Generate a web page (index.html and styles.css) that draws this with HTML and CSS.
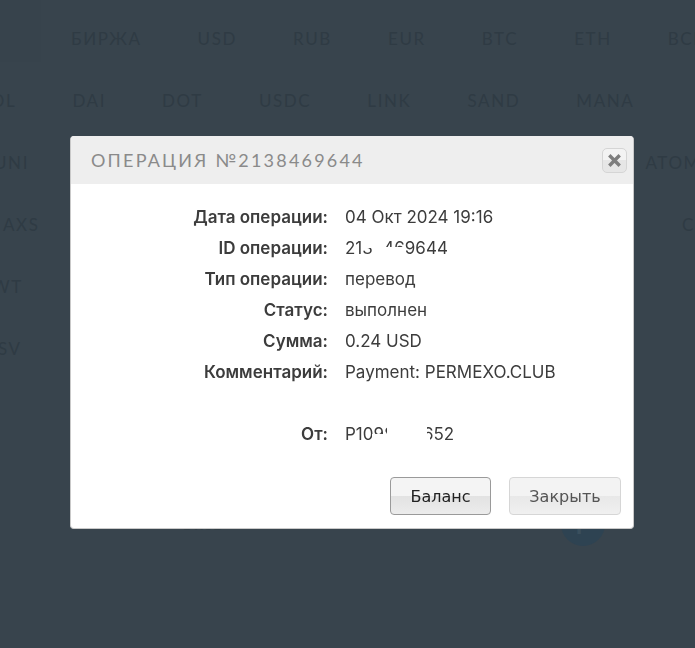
FILE: index.html
```html
<!DOCTYPE html>
<html lang="ru">
<head>
  <meta charset="UTF-8">
  <title>Операция</title>
  <link rel="stylesheet" href="styles.css">
</head>
<body>

  <div class="page">
    <div class="logo-box"></div>
    <div class="tabs tabs-first">
      <span>БИРЖА</span><span>USD</span><span>RUB</span><span>EUR</span><span>BTC</span><span>ETH</span><span>BCH</span>
    </div>
    <div class="tabs tabs-second">
      <span>SOL</span><span>DAI</span><span>DOT</span><span>USDC</span><span>LINK</span><span>SAND</span><span>MANA</span>
    </div>
    <div class="tabs tabs-spread tabs-uni"><span>UNI</span><span>ATOM</span></div>
    <div class="tabs tabs-spread tabs-axs"><span>AXS</span><span>C</span></div>
    <div class="tabs tabs-wt"><span>WT</span></div>
    <div class="tabs tabs-sv"><span>SV</span></div>

    <div class="history">
      <div class="history-row">
        <span class="history-sum">+ 1 RUB</span>
        <span class="history-dash">—</span>
        <span class="history-icon">P</span>
      </div>
      <div class="history-row">
        <span class="history-sum">+ 1 RUB</span>
        <span class="history-dash"></span>
        <span class="history-icon">P</span>
      </div>
    </div>
  </div>

  <!-- Окно операции -->
  <div class="overlay">
    <div class="modal">
      <div class="modal-head">
        <h2>Операция №2138469644</h2>
        <button class="close-btn" aria-label="Закрыть">
          <svg width="13" height="13" viewBox="0 0 13 13"><path d="M2.5 2.5 L10.5 10.5 M10.5 2.5 L2.5 10.5" stroke="#7d7d7d" stroke-width="3.4" stroke-linecap="square"/></svg>
        </button>
      </div>

      <div class="details">
        <div class="label">Дата операции:</div><div class="value">04 Окт 2024 19:16</div>
        <div class="label">ID операции:</div><div class="value">2138469644<i class="mask mask-id"></i><i class="mask mask-id2"></i></div>
        <div class="label">Тип операции:</div><div class="value">перевод</div>
        <div class="label">Статус:</div><div class="value">выполнен</div>
        <div class="label">Сумма:</div><div class="value">0.24 USD</div>
        <div class="label">Комментарий:</div><div class="value">Payment: PERMEXO.CLUB</div>
        <div class="label"></div><div class="value"></div>
        <div class="label">От:</div><div class="value">P1098143652<i class="mask mask-from"></i><i class="mask mask-from2"></i></div>
      </div>

      <div class="modal-foot">
        <button class="btn">Баланс</button>
        <button class="btn btn-off">Закрыть</button>
      </div>
    </div>
  </div>

</body>
</html>
```

FILE: styles.css
```css
html, body {
  margin: 0;
  padding: 0;
  height: 100%;
  overflow: hidden;
  background: #38444d;
}

.page {
  height: 648px;
  overflow: hidden;
  padding-top: 7px;
  box-sizing: border-box;
  font-family: 'Lato', sans-serif;
}

.logo-box {
  position: absolute;
  top: 0;
  left: 0;
  width: 41px;
  height: 62px;
  background: #37434c;
}

.tabs {
  position: relative;
  display: flex;
  gap: 56px;
  height: 62px;
  align-items: center;
  font-size: 17px;
  letter-spacing: 1.6px;
  color: #2f3b44;
  white-space: nowrap;
}

.tabs-first { padding-left: 71px; }
.tabs-second { margin-left: -20px; }
.tabs-spread { justify-content: space-between; }
.tabs-uni { margin-left: -6px; margin-right: -6px; }
.tabs-axs { margin-left: 3px; margin-right: 0; }
.tabs-wt { margin-left: -8px; }
.tabs-sv { margin-left: -2px; }

.history {
  margin-top: 34px;
}

.history-row {
  display: flex;
  align-items: center;
  height: 74px;
  padding-left: 171px;
}

.history-sum {
  width: 232px;
  font-size: 14px;
  font-weight: 700;
  color: #313e46;
}

.history-dash {
  width: 158px;
  font-size: 12px;
  color: #2f3b44;
}

.history-icon {
  width: 44px;
  height: 44px;
  border-radius: 50%;
  background: #2e4352;
  color: #3a4f5d;
  font-size: 24px;
  font-weight: 700;
  display: flex;
  align-items: center;
  justify-content: center;
}

.overlay {
  position: fixed;
  top: 0; left: 0; right: 0; bottom: 0;
  padding: 136px 0 0 70px;
}

.modal {
  width: 564px;
  height: 393px;
  box-sizing: border-box;
  background: #fff;
  border-radius: 4px;
  border: 1px solid #c9c9c9;
  border-top: none;
  overflow: hidden;
  display: flex;
  flex-direction: column;
}

.modal-head {
  height: 48px;
  background: #eeeeee;
  display: flex;
  align-items: center;
  justify-content: space-between;
  padding: 0 6px 0 20px;
  flex-shrink: 0;
}

.modal-head h2 {
  margin: 0;
  font-family: 'Lato', sans-serif;
  font-size: 18px;
  font-weight: 400;
  text-transform: uppercase;
  letter-spacing: 2.2px;
  color: #8a8a8a;
}

.close-btn {
  width: 25px;
  height: 25px;
  padding: 0;
  border: 1px solid #d5d5d5;
  border-radius: 5px;
  background: linear-gradient(#f3f3f3 50%, #e6e6e6 50%);
  display: flex;
  align-items: center;
  justify-content: center;
}

.details {
  display: grid;
  grid-template-columns: 257px 1fr;
  grid-auto-rows: 31px;
  column-gap: 17px;
  margin-top: 18px;
  font-family: 'Inter', sans-serif;
  font-size: 17px;
  line-height: 31px;
  color: #3c3c3c;
}

.label {
  text-align: right;
  font-weight: 600;
}

.value {
  position: relative;
}

.mask {
  position: absolute;
  background: #fff;
}

.mask-id { left: 16px; top: 5px; width: 24px; height: 10px; }
.mask-id2 { left: 27px; top: 14px; width: 34px; height: 14px; }
.mask-from { left: 27px; top: 15px; width: 58px; height: 14px; }
.mask-from2 { left: 42px; top: 5px; width: 40px; height: 12px; }

.modal-foot {
  margin-top: auto;
  display: flex;
  justify-content: flex-end;
  gap: 18px;
  padding: 0 12px 13px 0;
}

.btn {
  height: 38px;
  width: 101px;
  padding: 0;
  border: 1px solid #9a9a9a;
  border-radius: 4px;
  background: linear-gradient(#f4f4f4 50%, #e2e2e2 50%, #ececec);
  font-family: 'DejaVu Sans', sans-serif;
  font-size: 16px;
  color: #222;
}

.btn-off {
  width: 112px;
  border-color: #d6d6d6;
  background: linear-gradient(#f3f3f3 50%, #e8e8e8 50%, #f0f0f0);
  color: #555;
}
```
